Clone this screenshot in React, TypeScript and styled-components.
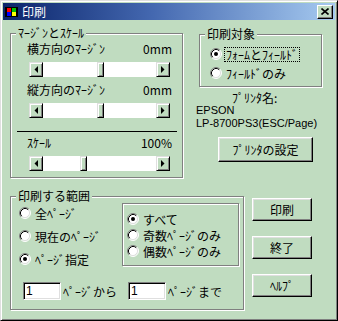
import React from "react";
import styled, { createGlobalStyle } from "styled-components";

const FACE = "#c0dcc0";

const GlobalStyle = createGlobalStyle`
  html, body {
    margin: 0;
    padding: 0;
    background: ${FACE};
  }
  body {
    font-family: "Noto Sans CJK JP", "Liberation Sans", sans-serif;
    font-size: 12px;
    color: #000;
  }
  * {
    box-sizing: border-box;
  }
`;

const Window = styled.div`
  width: 338px;
  height: 321px;
  background: ${FACE};
  border: 1px solid;
  border-color: #dfdfdf #000 #000 #dfdfdf;
  box-shadow: inset 1px 1px #fff, inset -1px -1px #808080;
  padding: 2px;
  display: flex;
  flex-direction: column;
`;

const TitleBar = styled.div`
  height: 17px;
  display: flex;
  align-items: center;
  padding: 0 2px;
  background: linear-gradient(to right, #0a246a 0%, #4468b0 45%, #a6caf0 100%);
  color: #fff;
  line-height: 17px;
`;

const TitleText = styled.span`
  margin-left: 4px;
  font-size: 12px;
`;

const CloseBox = styled.div`
  margin-left: auto;
  width: 16px;
  height: 14px;
  background: ${FACE};
  border: 1px solid;
  border-color: #fff #000 #000 #fff;
  box-shadow: inset -1px -1px #808080;
  display: flex;
  align-items: center;
  justify-content: center;
`;

const Body = styled.div`
  padding-left: 7px;
  display: flex;
  flex-direction: column;
`;

const TopRow = styled.div`
  margin-top: 13px;
  display: flex;
  align-items: flex-start;
`;

const BottomRow = styled.div`
  margin-top: 18px;
  display: flex;
  align-items: flex-start;
`;

const Group = styled.div<{ $w: number; $h: number }>`
  position: relative;
  flex: none;
  width: ${(p) => p.$w}px;
  height: ${(p) => p.$h}px;
  border: 1px solid #808080;
  box-shadow: inset 1px 1px #fff, 1px 1px #fff;
`;

const Legend = styled.span`
  position: absolute;
  top: -8px;
  left: 5px;
  padding: 0 2px;
  background: ${FACE};
  line-height: 14px;
  white-space: nowrap;
`;

const MarginGroup = styled(Group)`
  padding: 8px 10px 0 16px;
`;

const LabelRow = styled.div<{ $mt: number }>`
  margin-top: ${(p) => p.$mt}px;
  height: 14px;
  line-height: 14px;
  display: flex;
  justify-content: space-between;
  white-space: nowrap;
`;

const ScrollBar = styled.div`
  margin: 6px 2px 0;
  height: 15px;
  display: flex;
  background: #fff;
`;

const Raised = styled.div`
  flex: none;
  height: 15px;
  background: ${FACE};
  border: 1px solid;
  border-color: #dfdfdf #000 #000 #dfdfdf;
  box-shadow: inset 1px 1px #fff, inset -1px -1px #808080;
`;

const ArrowBtn = styled(Raised)`
  width: 14px;
  display: flex;
  align-items: center;
  justify-content: center;
`;

const Trough = styled.div`
  flex: 1;
  display: flex;
`;

const Thumb = styled(Raised)<{ $left: number }>`
  width: 7px;
  margin-left: ${(p) => p.$left}px;
`;

const Separator = styled.div`
  margin: 13px -5px 0 -10px;
  border-top: 1px solid #000;
`;

const RightCol = styled.div`
  margin-left: 13px;
  width: 126px;
  display: flex;
  flex-direction: column;
`;

const TargetGroup = styled(Group)`
  margin: 1px 0 0 3px;
  padding: 11px 0 0 10px;
  display: flex;
  flex-direction: column;
  gap: 3px;
`;

const RadioRow = styled.div`
  height: 16px;
  display: flex;
  align-items: center;
  gap: 3px;
  white-space: nowrap;
`;

const RadioLabel = styled.span<{ $focus?: boolean }>`
  line-height: 13px;
  padding: 0 1px;
  outline: ${(p) => (p.$focus ? "1px dotted #000" : "none")};
`;

const Line = styled.div<{ $ml?: number; $mt?: number }>`
  margin-left: ${(p) => p.$ml ?? 0}px;
  margin-top: ${(p) => p.$mt ?? 0}px;
  line-height: 13px;
  white-space: nowrap;
`;

const Latin = styled(Line)`
  font-family: "Liberation Sans", sans-serif;
  font-size: 11px;
`;

const Button = styled.button<{ $w: number; $h: number }>`
  flex: none;
  width: ${(p) => p.$w}px;
  height: ${(p) => p.$h}px;
  padding: 0;
  background: ${FACE};
  border: 1px solid;
  border-color: #fff #000 #000 #fff;
  box-shadow: inset -1px -1px #808080, inset 1px 1px #dfdfdf;
  font: inherit;
  color: #000;
  display: flex;
  align-items: center;
  justify-content: center;
`;

const SetupButton = styled(Button)`
  margin: 7px 0 0 22px;
`;

const RangeGroup = styled(Group)`
  padding: 6px 0 0 8px;
`;

const RangeTop = styled.div`
  display: flex;
  align-items: flex-start;
`;

const PageCol = styled.div`
  margin-top: 2px;
  width: 103px;
  display: flex;
  flex-direction: column;
  gap: 7px;
`;

const OddEvenBox = styled.div`
  width: 117px;
  height: 63px;
  border: 1px solid #808080;
  box-shadow: inset 1px 1px #fff, 1px 1px #fff;
  padding: 7px 0 0 4px;
  display: flex;
  flex-direction: column;
`;

const PagesRow = styled.div`
  margin: 15px 0 0 4px;
  display: flex;
  align-items: center;
`;

const TextBox = styled.input`
  flex: none;
  width: 38px;
  height: 18px;
  padding: 0 2px;
  background: #fff;
  border: 1px solid;
  border-color: #808080 #fff #fff #808080;
  box-shadow: inset 1px 1px #000, inset -1px -1px #dfdfdf;
  font-family: "Liberation Sans", sans-serif;
  font-size: 12px;
  color: #000;
  outline: none;
`;

const PagesLabel = styled.span<{ $w?: number }>`
  width: ${(p) => (p.$w ? `${p.$w}px` : "auto")};
  padding-left: 2px;
  white-space: nowrap;
`;

const ButtonCol = styled.div`
  margin: 2px 0 0 8px;
  display: flex;
  flex-direction: column;
  gap: 15px;
`;

const TitleIcon = () => (
  <svg width="13" height="10" viewBox="0 0 13 10">
    <rect width="13" height="10" fill="#000" />
    <rect x="2" y="1" width="4" height="4" fill="#ff0000" />
    <rect x="7" y="1" width="4" height="4" fill="#00c000" />
    <rect x="2" y="5" width="4" height="4" fill="#0000ff" />
    <rect x="7" y="5" width="4" height="4" fill="#ffff00" />
  </svg>
);

const CloseGlyph = () => (
  <svg width="8" height="7" viewBox="0 0 8 7">
    <path d="M0.5 0.5 L7.5 6.5 M7.5 0.5 L0.5 6.5" stroke="#000" strokeWidth="1.6" />
  </svg>
);

const Arrow = ({ dir }: { dir: "left" | "right" }) => (
  <svg width="4" height="7" viewBox="0 0 4 7">
    <polygon points={dir === "left" ? "4,0 4,7 0.5,3.5" : "0,0 0,7 3.5,3.5"} fill="#000" />
  </svg>
);

const Radio = ({ checked }: { checked?: boolean }) => (
  <svg width="12" height="12" viewBox="0 0 12 12" style={{ flex: "none" }}>
    <circle cx="6" cy="6" r="5" fill="#fff" />
    <path d="M2.11 9.89 A5.5 5.5 0 0 1 9.89 2.11" stroke="#808080" fill="none" />
    <path d="M9.89 2.11 A5.5 5.5 0 0 1 2.11 9.89" stroke="#fff" fill="none" />
    <path d="M2.82 9.18 A4.5 4.5 0 0 1 9.18 2.82" stroke="#000" fill="none" />
    <path d="M9.18 2.82 A4.5 4.5 0 0 1 2.82 9.18" stroke="#dfdfdf" fill="none" />
    {checked && <circle cx="6" cy="6" r="2" fill="#000" />}
  </svg>
);

interface SliderProps {
  label: string;
  value: string;
  thumb: number;
  mt: number;
}

const Slider = ({ label, value, thumb, mt }: SliderProps) => (
  <>
    <LabelRow $mt={mt}>
      <span>{label}</span>
      <span>{value}</span>
    </LabelRow>
    <ScrollBar>
      <ArrowBtn>
        <Arrow dir="left" />
      </ArrowBtn>
      <Trough>
        <Thumb $left={thumb} />
      </Trough>
      <ArrowBtn>
        <Arrow dir="right" />
      </ArrowBtn>
    </ScrollBar>
  </>
);

const Option = ({ label, checked, focus }: { label: string; checked?: boolean; focus?: boolean }) => (
  <RadioRow>
    <Radio checked={checked} />
    <RadioLabel $focus={focus}>{label}</RadioLabel>
  </RadioRow>
);

const App = () => {
  return (
    <>
      <GlobalStyle />
      <Window>
        <TitleBar>
          <TitleIcon />
          <TitleText>印刷</TitleText>
          <CloseBox>
            <CloseGlyph />
          </CloseBox>
        </TitleBar>
        <Body>
          <TopRow>
            <MarginGroup $w={173} $h={145}>
              <Legend>ﾏｰｼﾞﾝとｽｹｰﾙ</Legend>
              <Slider label="横方向のﾏｰｼﾞﾝ" value="0mm" thumb={54} mt={0} />
              <Slider label="縦方向のﾏｰｼﾞﾝ" value="0mm" thumb={54} mt={6} />
              <Separator />
              <Slider label="ｽｹｰﾙ" value="100%" thumb={37} mt={4} />
            </MarginGroup>
            <RightCol>
              <TargetGroup $w={123} $h={53}>
                <Legend>印刷対象</Legend>
                <Option label="ﾌｫｰﾑとﾌｨｰﾙﾄﾞ" checked focus />
                <Option label="ﾌｨｰﾙﾄﾞのみ" />
              </TargetGroup>
              <Line $ml={36} $mt={4}>
                ﾌﾟﾘﾝﾀ名:
              </Line>
              <Latin>EPSON</Latin>
              <Latin>LP-8700PS3(ESC/Page)</Latin>
              <SetupButton $w={95} $h={25}>
                ﾌﾟﾘﾝﾀの設定
              </SetupButton>
            </RightCol>
          </TopRow>
          <BottomRow>
            <RangeGroup $w={234} $h={114}>
              <Legend>印刷する範囲</Legend>
              <RangeTop>
                <PageCol>
                  <Option label="全ﾍﾟｰｼﾞ" />
                  <Option label="現在のﾍﾟｰｼﾞ" />
                  <Option label="ﾍﾟｰｼﾞ指定" checked />
                </PageCol>
                <OddEvenBox>
                  <Option label="すべて" checked />
                  <Option label="奇数ﾍﾟｰｼﾞのみ" />
                  <Option label="偶数ﾍﾟｰｼﾞのみ" />
                </OddEvenBox>
              </RangeTop>
              <PagesRow>
                <TextBox defaultValue="1" readOnly />
                <PagesLabel $w={67}>ﾍﾟｰｼﾞから</PagesLabel>
                <TextBox defaultValue="1" readOnly />
                <PagesLabel>ﾍﾟｰｼﾞまで</PagesLabel>
              </PagesRow>
            </RangeGroup>
            <ButtonCol>
              <Button $w={60} $h={23}>
                印刷
              </Button>
              <Button $w={60} $h={23}>
                終了
              </Button>
              <Button $w={60} $h={23}>
                ﾍﾙﾌﾟ
              </Button>
            </ButtonCol>
          </BottomRow>
        </Body>
      </Window>
    </>
  );
};

export default App;
